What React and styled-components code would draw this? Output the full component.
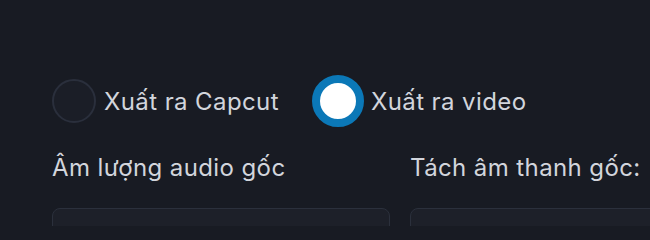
import React from "react";
import styled, { createGlobalStyle } from "styled-components";

const Global = createGlobalStyle`
  html, body { margin: 0; padding: 0; background: #181b23; overflow: hidden; }
  body { font-family: Inter, "Noto Sans", "Liberation Sans", sans-serif; }
`;

const Page = styled.div`
  width: 650px;
  height: 226px;
  overflow: hidden;
  padding: 76px 0 0 52px;
  box-sizing: border-box;
  color: #d2d5dc;
`;

const RadioRow = styled.div`
  display: flex;
  align-items: center;
  height: 50px;
`;

const Option = styled.label`
  display: flex;
  align-items: center;
  flex-shrink: 0;
  gap: ${(p) => (p.$checked ? "7px" : "8px")};
  margin-right: ${(p) => p.$gap || 0}px;
  font-size: 24px;
  letter-spacing: 0.4px;
  white-space: nowrap;
  cursor: pointer;
`;

const Radio = styled.span`
  box-sizing: border-box;
  display: block;
  flex-shrink: 0;
  width: ${(p) => (p.$checked ? 52 : 44)}px;
  height: ${(p) => (p.$checked ? 52 : 44)}px;
  border-radius: 50%;
  border: ${(p) => (p.$checked ? "8px solid #0b78b7" : "2px solid #2a2f3c")};
  background: ${(p) => (p.$checked ? "#ffffff" : "#1b1e27")};
`;

const Fields = styled.div`
  display: grid;
  grid-template-columns: 338px 338px;
  column-gap: 20px;
  margin-top: 28px;
`;

const Field = styled.div`
  display: flex;
  flex-direction: column;
`;

const Label = styled.div`
  font-size: 24px;
  letter-spacing: 0.4px;
  line-height: 28px;
  height: 28px;
  white-space: nowrap;
`;

const Box = styled.div`
  margin-top: 26px;
  height: 48px;
  border: 1px solid #2b303c;
  border-radius: 8px;
  background: #1d2029;
`;

export default function App() {
  return (
    <>
      <Global />
      <Page>
        <RadioRow>
          <Option $gap={33}>
            <Radio />
            Xuất ra Capcut
          </Option>
          <Option $checked>
            <Radio $checked />
            Xuất ra video
          </Option>
        </RadioRow>
        <Fields>
          <Field>
            <Label>Âm lượng audio gốc</Label>
            <Box />
          </Field>
          <Field>
            <Label>Tách âm thanh gốc:</Label>
            <Box />
          </Field>
        </Fields>
      </Page>
    </>
  );
}
